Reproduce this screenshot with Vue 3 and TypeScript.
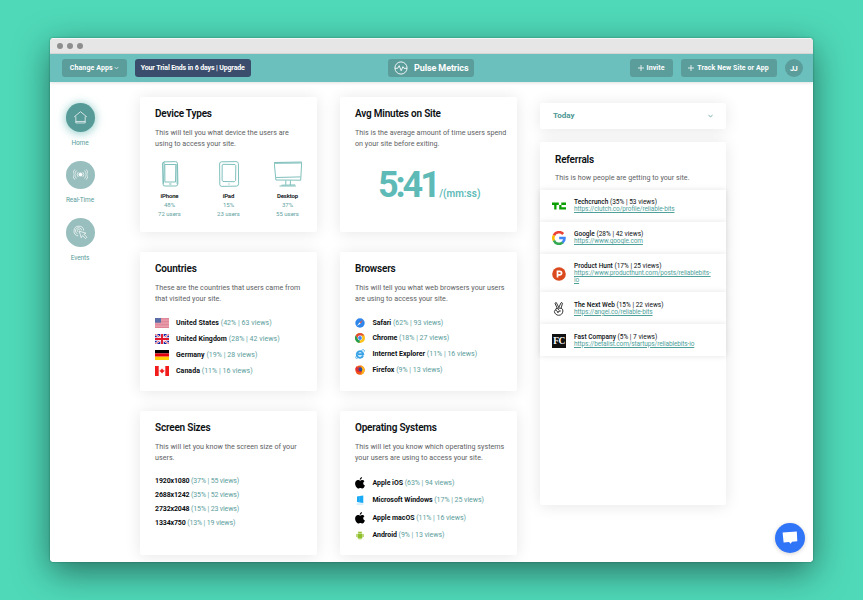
<script setup lang="ts">
interface Stat { name: string; info: string; icon?: string }
interface Referral extends Stat { url: string; icon: string }

const nav = [
  { label: 'Home', icon: 'home', active: true },
  { label: 'Real-Time', icon: 'live', active: false },
  { label: 'Events', icon: 'events', active: false },
]

const devices = [
  { name: 'iPhone', share: '48%', users: '72 users', icon: 'phone' },
  { name: 'iPad', share: '15%', users: '23 users', icon: 'tablet' },
  { name: 'Desktop', share: '37%', users: '55 users', icon: 'desktop' },
]

const countries: Stat[] = [
  { name: 'United States', info: '(42% | 63 views)', icon: 'us' },
  { name: 'United Kingdom', info: '(28% | 42 views)', icon: 'uk' },
  { name: 'Germany', info: '(19% | 28 views)', icon: 'de' },
  { name: 'Canada', info: '(11% | 16 views)', icon: 'ca' },
]

const browsers: Stat[] = [
  { name: 'Safari', info: '(62% | 93 views)', icon: 'safari' },
  { name: 'Chrome', info: '(18% | 27 views)', icon: 'chrome' },
  { name: 'Internet Explorer', info: '(11% | 16 views)', icon: 'ie' },
  { name: 'Firefox', info: '(9% | 13 views)', icon: 'firefox' },
]

const screens: Stat[] = [
  { name: '1920x1080', info: '(37% | 55 views)' },
  { name: '2688x1242', info: '(35% | 52 views)' },
  { name: '2732x2048', info: '(15% | 23 views)' },
  { name: '1334x750', info: '(13% | 19 views)' },
]

const systems: Stat[] = [
  { name: 'Apple iOS', info: '(63% | 94 views)', icon: 'apple' },
  { name: 'Microsoft Windows', info: '(17% | 25 views)', icon: 'windows' },
  { name: 'Apple macOS', info: '(11% | 16 views)', icon: 'apple' },
  { name: 'Android', info: '(9% | 13 views)', icon: 'android' },
]

const referrals: Referral[] = [
  { name: 'Techcrunch', info: '(35% | 53 views)', url: 'https://clutch.co/profile/reliable-bits', icon: 'tc' },
  { name: 'Google', info: '(28% | 42 views)', url: 'https://www.google.com', icon: 'google' },
  { name: 'Product Hunt', info: '(17% | 25 views)', url: 'https://www.producthunt.com/posts/reliablebits-io', icon: 'ph' },
  { name: 'The Next Web', info: '(15% | 22 views)', url: 'https://angel.co/reliable-bits', icon: 'angel' },
  { name: 'Fast Company', info: '(5% | 7 views)', url: 'https://betalist.com/startups/reliablebits-io', icon: 'fc' },
]
</script>

<template>
  <div class="stage">
    <div class="window">
      <div class="titlebar"><i class="dot" /><i class="dot" /><i class="dot" /></div>

      <header class="topbar">
        <div class="group left">
          <button class="btn apps">Change Apps
            <svg class="chev" viewBox="0 0 6 4"><path d="M.8.7 3 3.2 5.2.7" /></svg>
          </button>
          <button class="btn trial">Your Trial Ends in 6 days | Upgrade</button>
        </div>
        <div class="btn brand">
          <svg class="pulse" viewBox="0 0 14 14"><circle cx="7" cy="7" r="6.1" /><path d="M1 7.3h2.7l1.5-2.6 2 5 1.7-4 1 1.6H13" /></svg>
          <span>Pulse Metrics</span>
        </div>
        <div class="group right">
          <button class="btn invite"><svg class="plus" viewBox="0 0 6 6"><path d="M3 0v6M0 3h6" /></svg>Invite</button>
          <button class="btn track"><svg class="plus" viewBox="0 0 6 6"><path d="M3 0v6M0 3h6" /></svg>Track New Site or App</button>
          <div class="avatar">JJ</div>
        </div>
      </header>

      <main class="content">
        <nav class="sidebar">
          <a v-for="n in nav" :key="n.label" class="nav" :class="{ active: n.active }">
            <span class="disc">
              <svg v-if="n.icon === 'home'" class="glyph" viewBox="0 0 16 16"><path d="M1.2 7.4 8 1.8l6.8 5.6M3 6.8v7h10v-7M3 12.2h10" /></svg>
              <svg v-else-if="n.icon === 'live'" class="glyph" viewBox="0 0 16 16"><circle class="solid" cx="8" cy="8" r="1.7" /><path d="M5.6 5.4a3.8 3.8 0 0 0 0 5.2M3.7 3.8a6 6 0 0 0 0 8.4M1.9 2.6a8 8 0 0 0 0 10.8M10.4 5.4a3.8 3.8 0 0 1 0 5.2M12.3 3.8a6 6 0 0 1 0 8.4M14.1 2.6a8 8 0 0 1 0 10.8" /></svg>
              <svg v-else class="glyph" viewBox="0 0 16 16"><path d="M5.600 11.600A5.200 5.200 0 1 1 11.500 6M4.800 9.300A3.300 3.300 0 1 1 9.200 5.600M5.700 7.200a1.300 1.300 0 1 1 1.500-1.500M6.600 6.600l2.200 7 1.300-2.300 3.200 3.200 1.500-1.500-3.200-3.200 2.200-1.100z" /></svg>
            </span>
            <span class="nav-label">{{ n.label }}</span>
          </a>
        </nav>

        <div class="columns">
          <section class="card row1">
            <h2>Device Types</h2>
            <p>This will tell you what device the users are<br>using to access your site.</p>
            <div class="devices">
              <div v-for="d in devices" :key="d.name" class="device">
                <svg v-if="d.icon === 'phone'" class="sketch" viewBox="0 0 28 26"><path d="M8 .9 19.500.6q2 0 2 2l.4 20q0 2.400-2 2.400H9q-2 .2-2-2L6.500 3Q6.500.9 8.500.9M8.800 3.500h11l-.3 17.500H8.900zM6.700 2l1.400-.3-.6 21M13 23h2.500M20.900 3l.2 20" /></svg>
                <svg v-else-if="d.icon === 'tablet'" class="sketch" viewBox="0 0 28 26"><path d="M6.400.8 21 .6q2.300 0 2.400 2l.2 20.200q0 2.200-2 2.300L6.800 25.400q-2 0-2-2L4.600 3Q4.600.9 6.400.8M8 3.300 20 3.500l.8 1-.2 15-1.300 1.200-11.300-.2-.9-1.300L7.200 4zM13.400 23h1.200" /></svg>
                <svg v-else class="sketch" viewBox="0 0 28 26"><path d="M.2 1.500 27.700 1l-1 18.200L1.900 19zM.9 2.300l26-.3M2.200 16.500l24.200-.6M11.800 19.500v4.300M16.400 19.500v4.600M7.500 24.200l13.700-.3M5.500 25h16.400" /></svg>
                <b>{{ d.name }}</b>
                <span>{{ d.share }}</span>
                <span>{{ d.users }}</span>
              </div>
            </div>
          </section>

          <section class="card row1">
            <h2>Avg Minutes on Site</h2>
            <p>This is the average amount of time users spend<br>on your site before exiting.</p>
            <div class="average"><strong>5:41</strong><span>/(mm:ss)</span></div>
          </section>

          <section class="card row2">
            <h2>Countries</h2>
            <p>These are the countries that users came from<br>that visited your site.</p>
            <ul class="list countries">
              <li v-for="c in countries" :key="c.name">
                <svg v-if="c.icon === 'us'" class="flag" viewBox="0 0 14 10"><path fill="#eeb0bb" d="M0 0h14v10H0z" /><path stroke="#d9758a" stroke-width=".75" d="M0 .4h14M0 1.900h14M0 3.400h14M0 4.900h14M0 6.400h14M0 7.900h14M0 9.500h14" /><path fill="#5b6ea8" d="M0 0h6v4.700H0z" /></svg>
                <svg v-else-if="c.icon === 'uk'" class="flag" viewBox="0 0 14 10"><path fill="#1321a4" d="M0 0h14v10H0z" /><path stroke="#fff" stroke-width="2" d="m0 0 14 10M14 0 0 10" /><path stroke="#e0182d" stroke-width=".7" d="m0 0 14 10M14 0 0 10" /><path stroke="#fff" stroke-width="3.400" d="M7 0v10M0 5h14" /><path stroke="#e0182d" stroke-width="1.900" d="M7 0v10M0 5h14" /></svg>
                <svg v-else-if="c.icon === 'de'" class="flag" viewBox="0 0 14 10"><path d="M0 0h14v3.400H0z" /><path fill="#e2000f" d="M0 3.400h14v3.300H0z" /><path fill="#ffce00" d="M0 6.700h14V10H0z" /></svg>
                <svg v-else class="flag" viewBox="0 0 14 10"><path fill="#fff" d="M0 0h14v10H0z" /><path fill="#f21b1b" d="M0 0h3.700v10H0zM10.300 0H14v10h-3.700zM7 2.300l.6 1.100.6-.2-.1 1.400 1-.6.4.9-1.500 1.300.1.600-.9-.1v1h-.3v-1L6 6.800l.1-.6-1.600-1.300.4-.9 1 .6-.1-1.400.6.200z" /></svg>
                <span><b>{{ c.name }}</b> {{ c.info }}</span>
              </li>
            </ul>
          </section>

          <section class="card row2">
            <h2>Browsers</h2>
            <p>This will tell you what web browsers your users<br>are using to access your site.</p>
            <ul class="list browsers">
              <li v-for="b in browsers" :key="b.name">
                <svg v-if="b.icon === 'safari'" class="ico" viewBox="0 0 10 10"><circle cx="5" cy="5" r="4.700" fill="#2f86ea" /><path fill="#f2584a" d="M8 2 5.600 5.600 4.400 4.400z" /><path fill="#fff" d="M2 8l2.400-3.600 1.200 1.200z" /></svg>
                <svg v-else-if="b.icon === 'chrome'" class="ico" viewBox="0 0 10 10"><circle cx="5" cy="5" r="5" fill="#fbc116" /><path fill="#df4a3a" d="M.7 2.500a5 5 0 0 1 8.600 0H5L2.800 6z" /><path fill="#1f9d55" d="M.7 2.500 2.900 6.300 5 7.500 4.400 10A5 5 0 0 1 .7 2.500" /><circle cx="5" cy="5" r="2.400" fill="#fff" /><circle cx="5" cy="5" r="1.900" fill="#4285f4" /></svg>
                <svg v-else-if="b.icon === 'ie'" class="ico" viewBox="0 0 10 10"><path fill="none" stroke="#35a1e6" stroke-width="1.900" d="M8 6.700A3.200 3.200 0 1 1 8.200 5.200H3" /><path fill="none" stroke="#35a1e6" stroke-width=".8" d="M1.600 6.500C-.4 10 1.300 9.900 3.600 8.500M6.200 1.500C8.500.1 10 .5 9.100 2.800" /></svg>
                <svg v-else class="ico" viewBox="0 0 10 10"><circle cx="5" cy="5.100" r="4.700" fill="#f0571c" /><path fill="#fbb61a" d="M5.500.2c3 1 4.300 2.900 4.100 5.400A4.600 4.600 0 0 1 4.500 9.700C8.500 8 7 4 5.500.2" /><circle cx="5" cy="4.600" r="2.300" fill="#2c4ba0" /><path fill="#e02a2c" d="M.4 4C.8 2 1.600 1.300 1.600 1.300L2.800 3l1.700.5-1.200 1.300 1.400 1.400 1.600-.2C5 8 1.800 8 .4 4" /></svg>
                <span><b>{{ b.name }}</b> {{ b.info }}</span>
              </li>
            </ul>
          </section>

          <section class="card row3">
            <h2>Screen Sizes</h2>
            <p>This will let you know the screen size of your<br>users.</p>
            <ul class="list screens">
              <li v-for="s in screens" :key="s.name"><span><b>{{ s.name }}</b> {{ s.info }}</span></li>
            </ul>
          </section>

          <section class="card row3">
            <h2>Operating Systems</h2>
            <p>This will let you know which operating systems<br>your users are using to access your site.</p>
            <ul class="list systems">
              <li v-for="s in systems" :key="s.name">
                <svg v-if="s.icon === 'apple'" class="ico big" viewBox="0 0 10 12"><path d="M6.900.1Q7 1.300 6.300 2.100T4.800 2.900Q4.700 1.800 5.400 1T6.900.1M5.200 3.700c.7 0 1.200-.6 2.200-.6q1.300.1 2 1.100C7.600 5.300 7.900 7.700 9.900 8.400 9.300 10 8.300 11.500 7.300 11.500c-.8 0-1-.5-1.900-.5s-1.200.5-1.900.5C2 11.500.1 8.900.1 6.500c0-2.200 1.500-3.400 2.900-3.400 1 0 1.600.6 2.200.6" /></svg>
                <svg v-else-if="s.icon === 'windows'" class="ico big" viewBox="0 0 10 12"><path fill="#19a9f5" d="m2 2.400 2.600-.4v3.200H2zM4.700 2 8.300 1.500v3.700H4.700zM2 5.300h2.600v3.100L2 8zM4.700 5.300h3.600V9l-3.600-.5z" /><path fill="#a9dcf8" d="M1.600 9.600h6.800v.9H1.600z" /></svg>
                <svg v-else class="ico big" viewBox="0 0 10 12"><path fill="#8fc02c" d="M2.600 5h4.800v3.700q0 .5-.5.5h-.5v1.300h-.9V9.200h-1v1.300h-.9V9.200h-.5q-.5 0-.5-.5zM1.400 5h.8v3h-.8zM7.800 5h.8v3h-.8zM2.600 4.600q.1-1.200 1.200-1.700l-.4-.7.3-.1.4.7h1.800l.4-.7.3.1-.4.7q1.100.5 1.200 1.700z" /></svg>
                <span><b>{{ s.name }}</b> {{ s.info }}</span>
              </li>
            </ul>
          </section>
        </div>

        <aside class="aside">
          <div class="select">Today<svg class="chev" viewBox="0 0 6 4"><path d="M.5.5 3 3.400 5.500.5" /></svg></div>
          <section class="panel">
            <h2>Referrals</h2>
            <p>This is how people are getting to your site.</p>
            <ul class="refs">
              <li v-for="r in referrals" :key="r.name">
                <svg v-if="r.icon === 'tc'" class="logo" viewBox="0 0 14 14"><path fill="#0a9e01" d="M0 3.600h6.800v2.300H4.500v4.600H2.200V5.900H0zM9.300 3.600H14v2.300H9.500v2.300H14v2.300H7.200V5.900h2.100z" /></svg>
                <svg v-else-if="r.icon === 'google'" class="logo" viewBox="0 0 14 14"><g fill="none" stroke-width="2.600"><path stroke="#ea4335" d="M11.200 3A5.600 5.600 0 0 0 1.900 4.600" /><path stroke="#fbbc05" d="M2 4.300a5.600 5.600 0 0 0 0 5.400" /><path stroke="#34a853" d="M1.900 9.400a5.600 5.600 0 0 0 8.900 2" /><path stroke="#4285f4" d="M10.500 11.500A5.400 5.400 0 0 0 12.500 7H7.200" /></g></svg>
                <svg v-else-if="r.icon === 'ph'" class="logo" viewBox="0 0 14 14"><circle cx="7" cy="7" r="6.800" fill="#da4a1e" /><path fill="none" stroke="#fff" stroke-width="1.700" d="M5.500 10.600V4.300h2.300a1.700 1.700 0 0 1 0 3.600H5.500" /></svg>
                <svg v-else-if="r.icon === 'angel'" class="logo" viewBox="0 0 14 14"><path fill="#fff" stroke="#222" stroke-width=".9" stroke-linejoin="round" d="M5.200 6.100 3.100 1.600Q3.200.3 4.400.7L6.800 5.500 9 .8q1.100-.6 1.500.4L9.100 6.300q2 .5 1.800 2.700c-.2 2.800-2 4.300-4.200 4.300S2.600 11.600 2.400 9.600q0-1.500 1.400-1.500-.5-1.600 1.400-2M3.800 8.100l2.600 2.400M5.200 6.100l2.100 2.500M9.100 6.300 6 6M5.500 11q.4-2 3.300-2.100" /></svg>
                <span v-else class="logo fc">FC</span>
                <div class="ref-text">
                  <div class="ref-name"><b>{{ r.name }}</b> {{ r.info }}</div>
                  <a class="ref-url">{{ r.url }}</a>
                </div>
              </li>
            </ul>
          </section>
        </aside>

        <button class="chat">
          <svg viewBox="0 0 16 14"><path fill="#fff" d="M.6 1.600 14.800.6l.5 9.700-5.300.4-1.300 2.100-1.700-1.800-5.400.4z" /></svg>
        </button>
      </main>
    </div>
  </div>
</template>

<style>
body { background: #4fd9b8; overflow: hidden; }
</style>

<style scoped>
.stage {
  box-sizing: border-box;
  width: 863px;
  height: 600px;
  padding: 38px 50px;
  background: #4fd9b8;
  font-family: Roboto, "Liberation Sans", sans-serif;
  color: #0b0f12;
}
.window {
  width: 763px;
  height: 524px;
  border-radius: 4px;
  overflow: hidden;
  background: #fff;
  display: flex;
  flex-direction: column;
  box-shadow: 0 10px 34px rgba(20, 50, 45, .62), 0 0 2px rgba(20, 80, 65, .6);
}
.titlebar {
  height: 16px;
  flex: none;
  box-sizing: border-box;
  background: #e6e6e6;
  border-top: 1px solid #f5f5f5;
  border-bottom: 1px solid #dcd9d9;
  display: flex;
  align-items: center;
  gap: 4px;
  padding-left: 7px;
}
.dot { width: 6px; height: 6px; border-radius: 50%; background: #8e8e8e; }
.topbar {
  height: 28px;
  flex: none;
  background: #6bc0be;
  display: grid;
  grid-template-columns: 1fr auto 1fr;
  align-items: center;
  padding: 0 10.500px 0 12px;
  box-shadow: 0 1px 3px rgba(0, 0, 0, .12);
  z-index: 1;
}
.group { display: flex; align-items: center; gap: 8px; }
.right { justify-content: flex-end; }
.btn {
  box-sizing: border-box;
  height: 18px;
  border: 0;
  border-radius: 3px;
  background: #5a9d9b;
  color: #fff;
  font: 700 7px Roboto, "Liberation Sans", sans-serif;
  letter-spacing: 0;
  display: flex;
  align-items: center;
  justify-content: center;
  padding: 0;
  white-space: nowrap;
}
.apps { width: 65px; gap: 1.500px; letter-spacing: .1px; }
.trial { width: 115.500px; background: #3a4d6c; letter-spacing: -.14px; }
.brand { width: 86px; gap: 6px; font-size: 9px; letter-spacing: -.1px; margin-right: 2px; }
.invite { width: 43px; gap: 3px; }
.track { width: 96px; gap: 3px; }
.track, .invite { letter-spacing: .08px; }
.avatar {
  width: 18px;
  height: 18px;
  border-radius: 50%;
  background: #5a9d9b;
  color: #fff;
  font-size: 7.500px;
  font-weight: 700;
  letter-spacing: -.6px;
  display: flex;
  align-items: center;
  justify-content: center;
}
.chev { width: 5px; height: 4px; fill: none; stroke: currentColor; stroke-width: .8; }
.plus { width: 6px; height: 6px; stroke: #fff; stroke-width: .8; }
.pulse { width: 14px; height: 14px; fill: none; stroke: #fff; stroke-width: .9; }

.content { flex: 1; display: flex; position: relative; background: #fff; }
.sidebar {
  width: 60px;
  flex: none;
  padding-top: 21px;
  display: flex;
  flex-direction: column;
  gap: 14px;
}
.nav { display: flex; flex-direction: column; align-items: center; height: 43.500px; }
.disc {
  width: 29px;
  height: 29px;
  border-radius: 50%;
  background: #98bfbe;
  display: flex;
  align-items: center;
  justify-content: center;
}
.active .disc { background: #579b99; box-shadow: 0 1px 8px 1px rgba(87, 180, 174, .6); }
.glyph { width: 15px; height: 15px; fill: none; stroke: #fff; stroke-width: .75; }
.solid { fill: #fff; }
.nav-label { margin-top: 7px; font-size: 6.500px; line-height: 8px; color: #5a9d9b; letter-spacing: -.1px; }

.columns {
  margin-left: 30px;
  padding-top: 15px;
  display: grid;
  grid-template-columns: 177px 177px;
  grid-template-rows: 135px 139px 143.500px;
  gap: 20px 23px;
  align-content: start;
}
.card, .panel, .select { background: #fff; border-radius: 2px; box-shadow: 0 1px 16px rgba(0, 0, 0, .1); }
.card { box-sizing: border-box; padding: 11px 0 0 15px; }
h2 { margin: 0; font-size: 10px; line-height: 12px; font-weight: 600; letter-spacing: -.2px; white-space: nowrap; }
p { margin: 7.400px 0 0; font-size: 7.150px; line-height: 11px; letter-spacing: .02px; color: #5d6163; white-space: nowrap; }

.devices { display: flex; justify-content: space-between; margin: 12px 15px 0 0; }
.device { width: 29px; display: flex; flex-direction: column; align-items: center; font-size: 6px; line-height: 9px; color: #5fa39f; white-space: nowrap; }
.device b { color: #0b0f12; font-weight: 600; margin-top: 4px; letter-spacing: -.15px; }
.sketch { width: 28px; height: 26px; fill: none; stroke: #72b9b4; stroke-width: .9; }
.average { display: flex; align-items: baseline; color: #5dbab7; margin: 15px 0 0 23px; line-height: 42px; }
.average strong { font-size: 36px; font-weight: 700; letter-spacing: -3.100px; }
.average span { font-size: 10px; font-weight: 600; margin-left: 1.500px; }

.list { list-style: none; margin: 0; padding: 0; font-size: 7px; color: #5a9d9b; white-space: nowrap; }
.list li { display: flex; align-items: center; }
.list b { color: #0b0f12; font-weight: 700; }
.countries { margin-top: 10.600px; letter-spacing: .04px; }
.countries li { height: 16px; gap: 7px; }
.flag { width: 14px; height: 10px; }
.browsers { margin-top: 10.200px; }
.browsers li { height: 15.900px; gap: 7.500px; }
.ico { width: 10px; height: 10px; }
.screens { margin-top: 10.600px; letter-spacing: -.14px; }
.screens li { height: 14px; }
.systems { margin-top: 11px; letter-spacing: -.04px; }
.systems li { height: 17.300px; gap: 7.500px; }
.big { height: 12px; }

.aside { margin-left: 23px; width: 185.500px; padding-top: 21px; }
.select {
  height: 26px;
  box-sizing: border-box;
  padding: 0 13px;
  display: flex;
  align-items: center;
  justify-content: space-between;
  color: #4c9693;
  font-size: 8px;
  line-height: 10px;
  font-weight: 700;
}
.panel { margin-top: 13px; height: 363px; box-sizing: border-box; padding-top: 11.500px; }
.panel h2, .panel p { padding-left: 15px; }
.panel p { margin-top: 6px; }
.refs { list-style: none; margin: 7px 0 0; padding: 0; }
.refs li {
  box-sizing: border-box;
  min-height: 32px;
  padding: 9.500px 14px 8px 12px;
  display: flex;
  align-items: center;
  gap: 8px;
  background: #fff;
  box-shadow: 0 0 6px rgba(0, 0, 0, .11);
}
.logo { width: 14px; height: 14px; flex: none; }
.ref-text { font-size: 6.500px; line-height: 7px; }
.ref-name { letter-spacing: .02px; }
.ref-name b { font-weight: 500; }
.ref-url { color: #4f9f9b; text-decoration: underline; letter-spacing: -.11px; }
.fc {
  background: #111;
  color: #fff;
  font: 700 9.500px/14px "Liberation Serif", serif;
  letter-spacing: -.5px;
  text-align: center;
}

.chat {
  position: absolute;
  right: 8px;
  bottom: 9px;
  width: 30px;
  height: 30px;
  padding: 0;
  border: 0;
  border-radius: 50%;
  background: #3074f8;
  display: flex;
  align-items: center;
  justify-content: center;
  box-shadow: 0 1px 4px rgba(0, 0, 0, .18);
}
.chat svg { width: 16px; height: 14px; }
</style>
